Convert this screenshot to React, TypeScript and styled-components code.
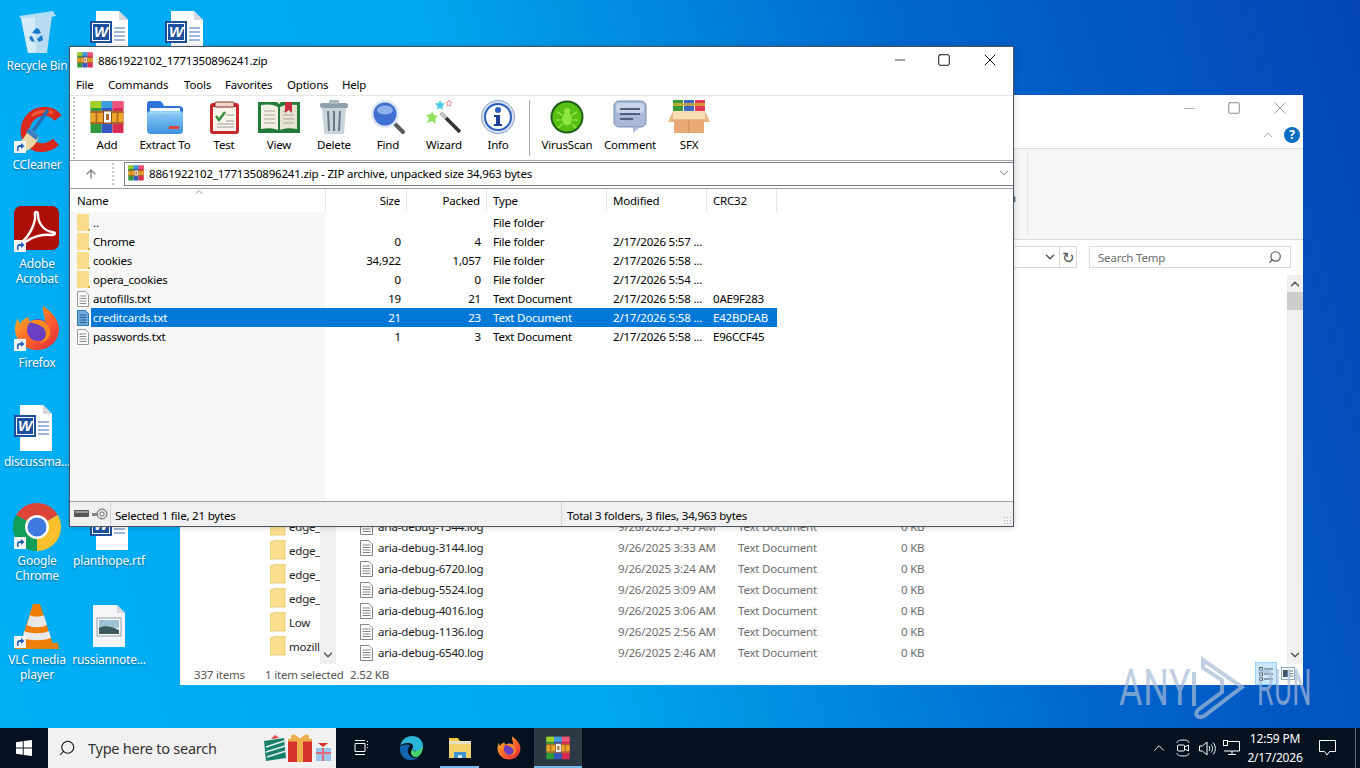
import { ReactNode } from 'react'
import styled, { createGlobalStyle } from 'styled-components'
import { ArrowUp, ChevronDown, ChevronUp, Minus, Search, Square, X } from 'lucide-react'

const GlobalStyle = createGlobalStyle`
  html, body {
    margin: 0;
    padding: 0;
    background: #0078d7;
  }
  * {
    box-sizing: border-box;
  }
`

const uiFont = `"Noto Sans", "Open Sans", "Liberation Sans", sans-serif`

/* ---------- drawings ---------- */

function Shortcut() {
  return (
    <ShortcutBadge viewBox="0 0 12 12">
      <rect width="12" height="12" fill="#f4f4f4" />
      <path d="M3 10V7c0-2 1-3 3-3h1V2l3.5 3L7 8V6H6C5 6 4.5 6.5 4.5 7.500V10z" fill="#1c5fb8" />
    </ShortcutBadge>
  )
}

function WordDoc({ size = 48 }: { size?: number }) {
  return (
    <svg width={size} height={size} viewBox="0 0 48 48">
      <path d="M11 1h23l9 9v37H11z" fill="#fff" />
      <path d="M34 1l9 9h-9z" fill="#d5d9de" />
      <path d="M29 18h11M29 22h11M29 26h11M29 30h11" stroke="#3f6fb5" strokeWidth="1.200" />
      <rect x="6" y="12" width="20" height="20" fill="#fff" stroke="#1d4f9f" strokeWidth="2" />
      <rect x="8" y="14" width="16" height="16" fill="#1d4f9f" />
      <text x="16" y="27" fontSize="15" fontWeight="700" fontStyle="italic" fill="#fff" textAnchor="middle" fontFamily="Liberation Sans">W</text>
    </svg>
  )
}

function RecycleBin() {
  return (
    <svg width="44" height="44" viewBox="0 0 44 44">
      <path d="M4 6l34-5 3 5-32 6z" fill="#dceef8" opacity=".8" />
      <path d="M6 8l31-3-5 38H13z" fill="#b9dcf0" />
      <path d="M6 8l14-1 1 36h-8z" fill="#d4ecf8" />
      <path d="M17 23l4-5 3 1 2 4-3 1zM27 25l1 5-4 2-2-3zM14 27l3-1 3 6-4-1z" fill="#1979c9" />
    </svg>
  )
}

function CCleaner() {
  return (
    <svg width="50" height="50" viewBox="0 0 50 50">
      <path d="M46 11C40 3 28 2 20 9 12 16 11 28 17 35c6 7 18 8 27 0" fill="none" stroke="#d9281e" strokeWidth="9" />
      <path d="M20 9c5-5 14-6 21-3" fill="none" stroke="#f0583a" strokeWidth="3" />
      <path d="M36 3L21 24" stroke="#2a6fb4" strokeWidth="3.500" />
      <path d="M17 21l10 8c-2 8-9 15-17 16-3-1-7-4-8-7 7-2 12-9 15-17z" fill="#ead6a6" />
      <path d="M17 21l10 8-3 4-10-8z" fill="#3a7fc0" />
    </svg>
  )
}

function Acrobat() {
  return (
    <svg width="46" height="46" viewBox="0 0 46 46">
      <rect width="45" height="44" rx="7" fill="#ab0f07" />
      <path d="M9 35C16 29 22 16 21 9c-1-4 3-4 3 0 0 8 6 16 14 17 4 0 4 3-1 3-9-1-19 2-24 6-4 3-6 2-4 0z" fill="none" stroke="#fff" strokeWidth="2.400" />
    </svg>
  )
}

function FirefoxLogo({ size = 46 }: { size?: number }) {
  return (
    <svg width={size} height={size} viewBox="0 0 46 46">
      <defs>
        <linearGradient id="ffBody" x1="0" y1="0" x2="1" y2="1">
          <stop offset="0" stopColor="#ffc21f" />
          <stop offset=".5" stopColor="#ff6a2b" />
          <stop offset="1" stopColor="#e0203f" />
        </linearGradient>
      </defs>
      <path d="M29 1c9 6 16 14 16 23 0 12-10 21-22 21S1 36 1 24c0-4 1-8 3-11 0 3 1 5 2 6 2-4 5-6 9-7-1 3 0 4 2 5 5-1 10 0 14-1 0-5-3-10-2-15z" fill="url(#ffBody)" />
      <circle cx="24" cy="25" r="11" fill="#6b3fc4" />
      <path d="M15 17c8-5 20-2 21 9 1 7-5 12-11 12 6-3 8-8 6-13-2-4-8-6-16-8z" fill="#ff8a1e" />
    </svg>
  )
}

function ChromeLogo() {
  return (
    <svg width="48" height="48" viewBox="0 0 48 48">
      <path d="M24 24L3.220 12A24 24 0 0 1 44.780 12z" fill="#db4437" />
      <path d="M24 24L44.780 12A24 24 0 0 1 24 48z" fill="#fbc02d" />
      <path d="M24 24V48A24 24 0 0 1 3.220 12z" fill="#0f9d58" />
      <circle cx="24" cy="24" r="12" fill="#fff" />
      <circle cx="24" cy="24" r="9.500" fill="#3f78e0" />
    </svg>
  )
}

function VlcCone() {
  return (
    <svg width="48" height="48" viewBox="0 0 48 48">
      <path d="M3 41h42l1 6H2z" fill="#e8820c" />
      <path d="M20 2h7l13 41H7z" fill="#f07d05" />
      <path d="M17 13c3 2 10 2 14 0l3 10c-5 3-15 3-20 0zM11 29c6 3 19 3 25 0l2 7c-7 3-21 3-28 0z" fill="#e8e8e8" />
    </svg>
  )
}

function ImageDoc() {
  return (
    <svg width="34" height="44" viewBox="0 0 34 44">
      <path d="M1 1h24l8 8v34H1z" fill="#f5f6f7" />
      <path d="M25 1l8 8h-8z" fill="#d5d9de" />
      <rect x="5" y="14" width="24" height="18" fill="#fff" stroke="#8f9ba6" />
      <rect x="7" y="16" width="20" height="8" fill="#9fc3d6" />
      <path d="M7 24c5-3 12-2 20 2v4H7z" fill="#3e5a5f" />
    </svg>
  )
}

function FolderGlyph() {
  return (
    <svg width="13" height="17" viewBox="0 0 13 17">
      <path d="M0 0h12v15l1 2H0z" fill="#fbdc8a" />
      <path d="M11 15h2v2h-2z" fill="#d8ae45" />
    </svg>
  )
}

function NavFolder() {
  return (
    <svg width="16" height="20" viewBox="0 0 16 20">
      <path d="M0 2h3l1-2h11v19H0z" fill="#fcdf8c" stroke="#e3c36a" strokeWidth=".8" />
    </svg>
  )
}

function TextGlyph({ selected = false }: { selected?: boolean }) {
  const line = selected ? '#1b5f9e' : '#8a8a8a'
  return (
    <svg width="12" height="16" viewBox="0 0 12 16">
      <path d="M.5.5h8l3 3v12H.5z" fill={selected ? '#74a9d8' : '#fff'} stroke={selected ? '#2d7ab8' : '#9a9a9a'} />
      <path d="M2.500 5h7M2.500 7.500h7M2.500 10h7M2.500 12.500h7" stroke={line} />
    </svg>
  )
}

function LogGlyph() {
  return (
    <svg width="13" height="16" viewBox="0 0 13 16">
      <path d="M.5.500h8.500l3.500 3.500v11.500H.5z" fill="#fff" stroke="#858585" />
      <path d="M2.500 5h8M2.500 7.500h8M2.500 10h8M2.500 12.500h8" stroke="#858585" />
    </svg>
  )
}

function RarBooks({ size = 32 }: { size?: number }) {
  return (
    <svg width={size} height={size} viewBox="0 0 33 34">
      <rect x="0" y="1" width="11" height="32" rx="1" fill="#2f9a3c" />
      <rect x="11" y="1" width="11" height="32" rx="1" fill="#3557c0" />
      <rect x="22" y="1" width="11" height="32" rx="1" fill="#d92c50" />
      <rect x="0" y="1" width="11" height="7" fill="#a4d02c" />
      <rect x="11" y="1" width="11" height="7" fill="#3f9ede" />
      <rect x="22" y="1" width="11" height="7" fill="#f0547a" />
      <rect x="0" y="11" width="33" height="2" fill="#a8682c" />
      <rect x="0" y="13" width="33" height="9" fill="#eda52a" />
      <rect x="0" y="22" width="33" height="2" fill="#a8682c" />
      <path d="M6 13v9M27 13v9" stroke="#b96f20" strokeWidth="2" />
      <rect x="13" y="11" width="8" height="12" fill="#fff" stroke="#8a5020" />
      <rect x="15.500" y="14" width="3" height="6" fill="#a8682c" />
    </svg>
  )
}

function ExtractIcon() {
  return (
    <svg width="36" height="34" viewBox="0 0 36 34">
      <defs>
        <linearGradient id="extractBlue" x1="0" y1="0" x2="0" y2="1">
          <stop offset="0" stopColor="#8fd0f7" />
          <stop offset="1" stopColor="#3d8fe0" />
        </linearGradient>
      </defs>
      <path d="M0 4c0-2 1-3 3-3h9c2 0 3 1 4 3l1 2h15c2 0 4 1 4 3v4H0z" fill="#2f73d8" />
      <rect x="3" y="8" width="30" height="6" fill="#f3f8fb" />
      <rect x="0" y="11" width="36" height="23" rx="4" fill="url(#extractBlue)" />
      <path d="M4 13h28" stroke="#d8effc" strokeDasharray="1.500 1.500" />
      <rect x="22" y="26" width="10" height="3" fill="#e0453a" />
    </svg>
  )
}

function TestIcon() {
  return (
    <svg width="29" height="33" viewBox="0 0 29 33">
      <rect x="0" y="2" width="29" height="31" rx="3" fill="#c9252c" />
      <rect x="3" y="6" width="23" height="24" fill="#f5f3ea" />
      <rect x="5" y="1" width="19" height="5" rx="1" fill="#f0d8c8" stroke="#8b2a2a" />
      <path d="M6 15l3 4 6-8" fill="none" stroke="#2f8f3a" strokeWidth="2.500" />
      <path d="M16 20h8M7 23h17M7 26h17" stroke="#9a9a9a" />
      <path d="M16 14h8" stroke="#9a9a9a" />
    </svg>
  )
}

function ViewIcon() {
  return (
    <svg width="42" height="31" viewBox="0 0 42 31">
      <path d="M0 0h19l2 2 2-2h19v31H0z" fill="#237b3a" />
      <path d="M3 3c6-1 12-1 17 2v23c-5-2-11-2-17-1z" fill="#f2f0e4" />
      <path d="M39 3c-6-1-12-1-17 2v23c5-2 11-2 17-1z" fill="#e8e4d3" />
      <path d="M6 9h11M6 13h11M6 17h11M6 21h11M25 9h5M25 13h11M25 17h11M25 21h11" stroke="#a8a79c" />
      <path d="M27 0h7v11l-3.500-3-3.500 3z" fill="#c92e3c" />
    </svg>
  )
}

function TrashIcon() {
  return (
    <svg width="30" height="34" viewBox="0 0 30 34">
      <rect x="1" y="3" width="28" height="5" rx="2" fill="#8da0ad" />
      <rect x="10" y="0" width="10" height="4" rx="1" fill="#aab8c2" />
      <path d="M3 8h24l-2 25c0 1-1 1-2 1H7c-1 0-2 0-2-1z" fill="#c9d3da" />
      <path d="M9 11l1 20M15 11v20M21 11l-1 20" stroke="#66788a" strokeWidth="2" />
    </svg>
  )
}

function FindIcon() {
  return (
    <svg width="36" height="36" viewBox="0 0 36 36">
      <path d="M23 23l10 10" stroke="#5b5b5b" strokeWidth="4" strokeLinecap="round" />
      <circle cx="15" cy="15" r="14" fill="#dfe7f4" />
      <circle cx="15" cy="15" r="11.500" fill="#3f6fd0" />
      <ellipse cx="15" cy="11" rx="8" ry="4.500" fill="#8fb0ea" />
    </svg>
  )
}

function WizardIcon() {
  return (
    <svg width="36" height="34" viewBox="0 0 36 34">
      <path d="M15 13l19 19" stroke="#333" strokeWidth="3.500" />
      <path d="M15 13l5 5" stroke="#c8c8c8" strokeWidth="3.500" />
      <path d="M6 11l2 4 4 1-3 3 1 5-4-3-5 2 2-5-3-3 5-1z" fill="#8fe05c" />
      <path d="M14 0l1.500 3 3.500.500-2.500 2.500.500 3.500-3-1.500-3 1.500.500-3.500L9 3.500l3.500-.5z" fill="#4ccbe8" />
      <path d="M23 0l1 2 2 .5-1.500 1.500.5 2-2-1-2 1 .5-2L20 2.500l2-.5z" fill="none" stroke="#ee8fa0" />
    </svg>
  )
}

function InfoIcon() {
  return (
    <svg width="34" height="34" viewBox="0 0 34 34">
      <circle cx="17" cy="17" r="16.500" fill="#d6dff0" stroke="#8fa3c8" />
      <circle cx="17" cy="17" r="13" fill="#fff" stroke="#2c5fc0" strokeWidth="2" />
      <circle cx="17" cy="10" r="3" fill="#2c5fc0" />
      <path d="M13 15h6v9h2v2h-8v-2h2v-7h-2z" fill="#1c3f9c" />
    </svg>
  )
}

function VirusIcon() {
  return (
    <svg width="34" height="34" viewBox="0 0 34 34">
      <circle cx="17" cy="17" r="16.500" fill="#1f5c17" />
      <circle cx="17" cy="17" r="14.500" fill="#58bf14" />
      <ellipse cx="17" cy="19" rx="5" ry="6.500" fill="#8fe63c" />
      <circle cx="17" cy="11" r="3" fill="#8fe63c" />
      <path d="M12 15l-5-3M22 15l5-3M11 20H6M23 20h5M12 24l-4 4M22 24l4 4" stroke="#8fe63c" strokeWidth="1.500" />
    </svg>
  )
}

function CommentIcon() {
  return (
    <svg width="34" height="34" viewBox="0 0 34 34">
      <rect x="1" y="1" width="32" height="26" rx="5" fill="#a9b9d6" stroke="#7d8fb0" />
      <rect x="3" y="3" width="28" height="10" rx="4" fill="#c8d4e8" />
      <path d="M7 9h20M7 14h20M7 19h13" stroke="#4f5f7c" strokeWidth="2" />
      <path d="M20 27h7l-7 6z" fill="#a9b9d6" />
    </svg>
  )
}

function SfxIcon() {
  return (
    <svg width="42" height="34" viewBox="0 0 42 34">
      <rect x="5" y="0" width="10" height="14" fill="#3d9a3a" />
      <rect x="16" y="0" width="10" height="14" fill="#3f67c0" />
      <rect x="27" y="0" width="10" height="14" fill="#e03a58" />
      <rect x="5" y="3" width="32" height="3" fill="#d8b030" opacity=".8" />
      <path d="M5 11h32v8H5z" fill="#f6dfb4" />
      <path d="M5 11L0 22h6V32h30V22h6l-5-11v8H5z" fill="#eab583" />
      <path d="M6 20h30v13H6z" fill="#e8ab78" />
      <path d="M21 20v13" stroke="#c98a58" />
    </svg>
  )
}

function DriveGlyphs() {
  return (
    <svg width="34" height="12" viewBox="0 0 34 12">
      <rect x="0" y="2" width="15" height="7" rx="1" fill="#555" />
      <rect x="1" y="3" width="13" height="2" fill="#999" />
      <circle cx="28" cy="6" r="5" fill="#ddd" stroke="#666" />
      <circle cx="28" cy="6" r="2" fill="#fff" stroke="#777" />
      <path d="M18 5h6v3h-6z" fill="#888" />
    </svg>
  )
}

function WindowsLogo() {
  return (
    <svg width="16" height="16" viewBox="0 0 16 16">
      <path d="M0 2.200l6.800-1v6.300H0zM7.700 1.100L16 0v7.500H7.700zM0 8.400h6.800v6.400L0 13.800zM7.700 8.400H16V16l-8.300-1.100z" fill="#fff" />
    </svg>
  )
}

function GiftBoxes() {
  return (
    <svg width="68" height="28" viewBox="0 0 68 28">
      <path d="M0 7l20-3 2 20-20 3z" fill="#17806a" />
      <path d="M2 13l18-6M2 18l19-6M3 23l19-6" stroke="#e6eef0" strokeWidth="1.500" />
      <path d="M7 5l4-4 4 3z" fill="#d64a3c" />
      <rect x="24" y="6" width="24" height="22" fill="#d6322b" />
      <rect x="33" y="6" width="6" height="22" fill="#eeb04c" />
      <path d="M24 6h24" stroke="#eeb04c" strokeWidth="3" />
      <path d="M36 5c-4-5-9-6-9-2s5 3 9 2c4-5 9-6 9-2s-5 3-9 2z" fill="#eeb04c" />
      <rect x="52" y="14" width="15" height="13" fill="#9cc6ea" />
      <path d="M59 14v13M52 19h15" stroke="#e36a7a" strokeWidth="2" />
      <path d="M59 13l-5-4h10z" fill="#d6322b" />
    </svg>
  )
}

function TaskViewIcon() {
  return (
    <svg width="17" height="16" viewBox="0 0 17 16" fill="none" stroke="#fff">
      <path d="M3 3.500h10v8H3zM3 .5h10M3 14.500h10M15.500 1v1M15.500 4v1M15.500 7v1" />
    </svg>
  )
}

function EdgeLogo() {
  return (
    <svg width="24" height="24" viewBox="0 0 24 24">
      <path d="M1 11C2 4 7 0 13 0c6 0 11 4 11 10 0 3-3 5-6 5-3 0-5-1-5-2 2-2 1-6-3-6C5 7 1 8 1 11z" fill="#2bb5d8" />
      <path d="M1 11c3-3 8-3 10-1-3 2-3 7 0 10 2 2 6 3 9 1-3 3-7 3-10 3-6-1-10-7-9-13z" fill="#1266b0" />
      <path d="M13 13c1 3 6 4 11-3 0 6-3 10-6 11-4 1-8-3-5-8z" fill="#47d16a" />
    </svg>
  )
}

function ExplorerLogo() {
  return (
    <svg width="24" height="22" viewBox="0 0 24 22">
      <path d="M1 1h9l2 3h11v17H1z" fill="#f7c948" />
      <path d="M1 4h22v3H1z" fill="#e6e2c8" />
      <path d="M1 7h22v14H1z" fill="#f5d36a" />
      <path d="M6 15h12v6H6z" fill="#3f93d0" />
      <path d="M10 18h4v3h-4z" fill="#d6e8f5" />
    </svg>
  )
}

function MeetIcon() {
  return (
    <svg width="14" height="18" viewBox="0 0 14 18" fill="none" stroke="#fff">
      <path d="M1 4c0-2 2-3 6-3s6 1 6 3M1 14c0 2 2 3 6 3s6-1 6-3" />
      <rect x="1.500" y="6" width="7" height="6" rx="1" />
      <path d="M8.500 8l4-2v6l-4-2" />
    </svg>
  )
}

function SpeakerIcon() {
  return (
    <svg width="17" height="15" viewBox="0 0 17 15" fill="none" stroke="#fff">
      <path d="M.5 5h3L8 1v13L3.500 10h-3z" />
      <path d="M10 5c1 1 1 4 0 5M12 3.500c2 2 2 6 0 8M14 1.500c3 3 3 9 0 12" />
    </svg>
  )
}

function NetworkIcon() {
  return (
    <svg width="17" height="16" viewBox="0 0 17 16" fill="none" stroke="#fff">
      <path d="M4 1.500h12.500V11H1" />
      <rect x=".5" y=".5" width="4" height="5" />
      <path d="M9 11v3M5 14.500h8" />
    </svg>
  )
}

function NotificationIcon() {
  return (
    <svg width="17" height="16" viewBox="0 0 17 16" fill="none" stroke="#fff">
      <path d="M.5.500h16v11h-6L8 15l-2.500-3.500h-5z" />
    </svg>
  )
}

/* ---------- data ---------- */

const toolbarButtons: { label: string; width: number; icon: ReactNode }[] = [
  { label: 'Add', width: 58, icon: <RarBooks size={34} /> },
  { label: 'Extract To', width: 58, icon: <ExtractIcon /> },
  { label: 'Test', width: 60, icon: <TestIcon /> },
  { label: 'View', width: 50, icon: <ViewIcon /> },
  { label: 'Delete', width: 60, icon: <TrashIcon /> },
  { label: 'Find', width: 48, icon: <FindIcon /> },
  { label: 'Wizard', width: 64, icon: <WizardIcon /> },
  { label: 'Info', width: 44, icon: <InfoIcon /> },
]

const toolbarButtonsRight: { label: string; width: number; icon: ReactNode }[] = [
  { label: 'VirusScan', width: 56, icon: <VirusIcon /> },
  { label: 'Comment', width: 70, icon: <CommentIcon /> },
  { label: 'SFX', width: 48, icon: <SfxIcon /> },
]

const menuItems = [
  { label: 'File', width: 32 },
  { label: 'Commands', width: 76 },
  { label: 'Tools', width: 41 },
  { label: 'Favorites', width: 62 },
  { label: 'Options', width: 55 },
  { label: 'Help', width: 40 },
]

const archiveRows = [
  { name: '..', size: '', packed: '', type: 'File folder', modified: '', crc: '', folder: true },
  { name: 'Chrome', size: '0', packed: '4', type: 'File folder', modified: '2/17/2026 5:57 ...', crc: '', folder: true },
  { name: 'cookies', size: '34,922', packed: '1,057', type: 'File folder', modified: '2/17/2026 5:58 ...', crc: '', folder: true },
  { name: 'opera_cookies', size: '0', packed: '0', type: 'File folder', modified: '2/17/2026 5:54 ...', crc: '', folder: true },
  { name: 'autofills.txt', size: '19', packed: '21', type: 'Text Document', modified: '2/17/2026 5:58 ...', crc: '0AE9F283', folder: false },
  { name: 'creditcards.txt', size: '21', packed: '23', type: 'Text Document', modified: '2/17/2026 5:58 ...', crc: 'E42BDEAB', folder: false, selected: true },
  { name: 'passwords.txt', size: '1', packed: '3', type: 'Text Document', modified: '2/17/2026 5:58 ...', crc: 'E96CCF45', folder: false },
]

const navFolders = ['edge_BITS_4576_2060128', 'edge_BITS_5124_1481553', 'edge_BITS_6100_2105712', 'edge_BITS_6388_1953421', 'Low', 'mozilla-temp-files']

const logRows = [
  ['aria-debug-1344.log', '9/26/2025 3:43 AM'],
  ['aria-debug-3144.log', '9/26/2025 3:33 AM'],
  ['aria-debug-6720.log', '9/26/2025 3:24 AM'],
  ['aria-debug-5524.log', '9/26/2025 3:09 AM'],
  ['aria-debug-4016.log', '9/26/2025 3:06 AM'],
  ['aria-debug-1136.log', '9/26/2025 2:56 AM'],
  ['aria-debug-6540.log', '9/26/2025 2:46 AM'],
]

export default function App() {
  return (
    <>
      <GlobalStyle />
      <Screen>
        <Desktop>
          <DesktopIcon $left={0} $top={8}>
            <IconSlot $pad={2}><RecycleBin /></IconSlot>
            <IconLabel>Recycle Bin</IconLabel>
          </DesktopIcon>
          <DesktopIcon $left={72} $top={8}>
            <IconSlot $pad={2}><WordDoc /></IconSlot>
          </DesktopIcon>
          <DesktopIcon $left={147} $top={8}>
            <IconSlot $pad={2}><WordDoc /></IconSlot>
          </DesktopIcon>
          <DesktopIcon $left={0} $top={107}>
            <IconSlot><CCleaner /><Shortcut /></IconSlot>
            <IconLabel>CCleaner</IconLabel>
          </DesktopIcon>
          <DesktopIcon $left={0} $top={206}>
            <IconSlot><Acrobat /><Shortcut /></IconSlot>
            <IconLabel>Adobe Acrobat</IconLabel>
          </DesktopIcon>
          <DesktopIcon $left={0} $top={305}>
            <IconSlot><FirefoxLogo /><Shortcut /></IconSlot>
            <IconLabel>Firefox</IconLabel>
          </DesktopIcon>
          <DesktopIcon $left={0} $top={404}>
            <IconSlot $shift={8}><WordDoc /></IconSlot>
            <IconLabel>discussma...</IconLabel>
          </DesktopIcon>
          <DesktopIcon $left={0} $top={503}>
            <IconSlot><ChromeLogo /><Shortcut /></IconSlot>
            <IconLabel>Google Chrome</IconLabel>
          </DesktopIcon>
          <DesktopIcon $left={72} $top={503}>
            <IconSlot><WordDoc /></IconSlot>
            <IconLabel>planthope.rtf</IconLabel>
          </DesktopIcon>
          <DesktopIcon $left={0} $top={602}>
            <IconSlot><VlcCone /><Shortcut /></IconSlot>
            <IconLabel>VLC media player</IconLabel>
          </DesktopIcon>
          <DesktopIcon $left={72} $top={602}>
            <IconSlot $pad={2}><ImageDoc /></IconSlot>
            <IconLabel>russiannote...</IconLabel>
          </DesktopIcon>

          <ExplorerWindow>
            <ExplorerTitle>
              <Minus size={17} strokeWidth={1} color="#888" />
              <Square size={14} strokeWidth={1.7} color="#888" />
              <X size={20} strokeWidth={1} color="#888" />
            </ExplorerTitle>
            <ExplorerTabs>
              <ChevronUp size={16} strokeWidth={1.5} color="#aaa" />
              <HelpBadge>?</HelpBadge>
            </ExplorerTabs>
            <Ribbon>
              <RibbonCut>Invert selection</RibbonCut>
              <RibbonRest />
            </Ribbon>
            <ExplorerAddress>
              <AddressBox>
                <ChevronDown size={14} strokeWidth={2.5} color="#555" />
                <AddressRefresh>&#8635;</AddressRefresh>
              </AddressBox>
              <SearchBox>
                <span>Search Temp</span>
                <Search size={14} color="#555" style={{ transform: 'scaleX(-1)' }} />
              </SearchBox>
            </ExplorerAddress>
            <ExplorerBody>
              <NavPane>
                <NavRows>
                  {navFolders.map((folder) => (
                    <NavRow key={folder}>
                      <NavFolder />
                      <span>{folder}</span>
                    </NavRow>
                  ))}
                </NavRows>
                <ScrollBar>
                  <ChevronUp size={14} strokeWidth={2.5} color="#555" />
                  <ChevronDown size={14} strokeWidth={2.5} color="#555" />
                </ScrollBar>
              </NavPane>
              <LogList>
                {logRows.map(([name, date]) => (
                  <LogRow key={name}>
                    <LogGlyph />
                    <LogName>{name}</LogName>
                    <LogMeta>{date}</LogMeta>
                    <LogMeta>Text Document</LogMeta>
                    <LogMeta>0 KB</LogMeta>
                  </LogRow>
                ))}
              </LogList>
              <ScrollBar>
                <ChevronUp size={14} strokeWidth={2.5} color="#555" />
                <ScrollThumb />
                <ChevronDown size={14} strokeWidth={2.5} color="#555" />
              </ScrollBar>
            </ExplorerBody>
            <ExplorerStatus>
              <StatusCell $width={71}>337 items</StatusCell>
              <StatusCell $width={85}>1 item selected</StatusCell>
              <StatusCell $width={60}>2.52 KB</StatusCell>
              <ViewButtons>
                <ViewDetails>
                  <svg width="18" height="18" viewBox="0 0 18 18" fill="none" stroke="#555">
                    <path d="M2.500 2.500h3v3h-3zM2.500 7.500h3v3h-3zM2.500 12.500h3v3h-3zM7 4h9M7 9h9M7 14h9" />
                  </svg>
                </ViewDetails>
                <ViewThumbs>
                  <svg width="14" height="13" viewBox="0 0 14 13">
                    <rect x=".5" y=".5" width="13" height="12" fill="#fff" stroke="#8ab" />
                    <rect x="2" y="3" width="5" height="7" fill="#456" />
                    <path d="M8 4h4M8 6.500h4M8 9h4" stroke="#678" />
                  </svg>
                </ViewThumbs>
              </ViewButtons>
            </ExplorerStatus>
          </ExplorerWindow>

          <RarWindow>
            <RarTitle>
              <RarBooks size={16} />
              <RarTitleText>8861922102_1771350896241.zip</RarTitleText>
              <RarControls>
                <Minus size={16} strokeWidth={1.2} color="#111" />
                <Square size={14} strokeWidth={1.7} color="#111" />
                <X size={20} strokeWidth={1.2} color="#111" />
              </RarControls>
            </RarTitle>
            <MenuBar>
              {menuItems.map((item) => (
                <MenuItem key={item.label} $width={item.width}>{item.label}</MenuItem>
              ))}
            </MenuBar>
            <Toolbar>
              <ToolbarGrip />
              {toolbarButtons.map((button) => (
                <ToolButton key={button.label} $width={button.width}>
                  <ToolIcon>{button.icon}</ToolIcon>
                  <ToolLabel>{button.label}</ToolLabel>
                </ToolButton>
              ))}
              <ToolbarSeparator />
              {toolbarButtonsRight.map((button) => (
                <ToolButton key={button.label} $width={button.width}>
                  <ToolIcon>{button.icon}</ToolIcon>
                  <ToolLabel>{button.label}</ToolLabel>
                </ToolButton>
              ))}
            </Toolbar>
            <AddressRow>
              <UpButton><ArrowUp size={14} strokeWidth={2.5} color="#8c8c8c" /></UpButton>
              <AddressGrip />
              <AddressField>
                <RarBooks size={16} />
                <AddressText>8861922102_1771350896241.zip - ZIP archive, unpacked size 34,963 bytes</AddressText>
                <ChevronDown size={14} strokeWidth={1.2} color="#333" />
              </AddressField>
            </AddressRow>
            <ArchiveList>
              <ArchiveHeader>
                <HeaderName>
                  Name
                  <SortCaret><ChevronUp size={12} strokeWidth={1.2} color="#555" /></SortCaret>
                </HeaderName>
                <HeaderCell $align="right" $width={81}>Size</HeaderCell>
                <HeaderCell $align="right" $width={80}>Packed</HeaderCell>
                <HeaderCell $align="left" $width={120}>Type</HeaderCell>
                <HeaderCell $align="left" $width={100}>Modified</HeaderCell>
                <HeaderCell $align="left" $width={70}>CRC32</HeaderCell>
              </ArchiveHeader>
              <ArchiveBody>
                {archiveRows.map((row) => (
                  <ArchiveRow key={row.name}>
                    <RowIcon>{row.folder ? <FolderGlyph /> : <TextGlyph selected={row.selected} />}</RowIcon>
                    <RowBand $selected={!!row.selected}>
                      <RowName>{row.name}</RowName>
                      <RowNumber>{row.size}</RowNumber>
                      <RowNumber>{row.packed}</RowNumber>
                      <RowText>{row.type}</RowText>
                      <RowText>{row.modified}</RowText>
                      <RowText>{row.crc}</RowText>
                    </RowBand>
                  </ArchiveRow>
                ))}
              </ArchiveBody>
            </ArchiveList>
            <RarStatus>
              <StatusDrives><DriveGlyphs /></StatusDrives>
              <StatusLeft>Selected 1 file, 21 bytes</StatusLeft>
              <StatusRight>Total 3 folders, 3 files, 34,963 bytes</StatusRight>
              <StatusGrip />
            </RarStatus>
          </RarWindow>

          <Watermark>
            <WatermarkText $scale={0.72}>ANY</WatermarkText>
            <svg width="58" height="64" viewBox="0 0 58 64" fill="none" stroke="#a8bcd8" strokeWidth="4">
              <path d="M4 16V50M13 4L52 31 14 60C8 63 4 59 8 54L32 36V24L13 12z" />
            </svg>
            <WatermarkText $scale={0.54}>RUN</WatermarkText>
          </Watermark>
        </Desktop>

        <Taskbar>
          <StartButton><WindowsLogo /></StartButton>
          <SearchBar>
            <Search size={18} strokeWidth={1.4} color="#111" style={{ transform: 'scaleX(-1)' }} />
            <SearchPrompt>Type here to search</SearchPrompt>
            <GiftBoxes />
          </SearchBar>
          <TaskIcon $width={48}><TaskViewIcon /></TaskIcon>
          <TaskIcon $width={48} $gap={3}><EdgeLogo /></TaskIcon>
          <TaskIcon $width={39} $gap={5} $running><ExplorerLogo /></TaskIcon>
          <TaskIcon $width={48} $gap={6}><FirefoxLogo size={24} /></TaskIcon>
          <TaskIcon $width={48} $gap={1} $running $active><RarBooks size={24} /></TaskIcon>
          <Tray>
            <TrayIcon $width={24}><ChevronUp size={18} strokeWidth={1.2} color="#fff" /></TrayIcon>
            <TrayIcon $width={24}><MeetIcon /></TrayIcon>
            <TrayIcon $width={24}><SpeakerIcon /></TrayIcon>
            <TrayIcon $width={24}><NetworkIcon /></TrayIcon>
            <Clock>
              <span>12:59 PM</span>
              <span>2/17/2026</span>
            </Clock>
            <TrayIcon $width={40}><NotificationIcon /></TrayIcon>
            <ShowDesktop />
          </Tray>
        </Taskbar>
      </Screen>
    </>
  )
}

/* ---------- desktop ---------- */

const Screen = styled.div`
  display: flex;
  flex-direction: column;
  width: 1360px;
  height: 768px;
  overflow: hidden;
  font-family: ${uiFont};
  font-size: 11.5px;
  letter-spacing: -0.2px;
  background: linear-gradient(75deg, #00b0f6 0%, #00a6ee 40%, #0064cc 72%, #0646b6 100%);
`

const Desktop = styled.div`
  position: relative;
  flex: 1;
`

const DesktopIcon = styled.div<{ $left: number; $top: number }>`
  position: absolute;
  left: ${(p) => p.$left}px;
  top: ${(p) => p.$top}px;
  display: flex;
  flex-direction: column;
  align-items: center;
  width: 74px;
`

const IconSlot = styled.div<{ $pad?: number; $shift?: number }>`
  position: relative;
  display: flex;
  justify-content: center;
  align-items: flex-start;
  width: 100%;
  height: 50px;
  padding-top: ${(p) => p.$pad ?? 0}px;
  padding-right: ${(p) => p.$shift ?? 0}px;
`

const ShortcutBadge = styled.svg`
  position: absolute;
  left: 14px;
  top: 34px;
  width: 12px;
  height: 12px;
`

const IconLabel = styled.div`
  width: 74px;
  color: #fff;
  font-size: 12px;
  line-height: 15px;
  text-align: center;
  letter-spacing: -0.2px;
  text-shadow: 0 1px 2px rgba(0, 0, 0, 0.45);
`

/* ---------- explorer behind ---------- */

const ExplorerWindow = styled.div`
  position: absolute;
  left: 180px;
  top: 95px;
  display: flex;
  flex-direction: column;
  width: 1123px;
  height: 590px;
  background: #fff;
  color: #000;
`

const ExplorerTitle = styled.div`
  display: flex;
  justify-content: flex-end;
  align-items: center;
  gap: 29px;
  height: 26px;
  padding-right: 13px;
`

const ExplorerTabs = styled.div`
  display: flex;
  justify-content: flex-end;
  align-items: center;
  gap: 8px;
  height: 27px;
  padding-right: 3px;
`

const HelpBadge = styled.div`
  display: flex;
  justify-content: center;
  align-items: center;
  width: 16px;
  height: 16px;
  border-radius: 50%;
  background: #0a6cc2;
  color: #fff;
  font-size: 12px;
  font-weight: 700;
`

const Ribbon = styled.div`
  display: flex;
  justify-content: flex-end;
  align-items: center;
  height: 92px;
  background: #f5f6f7;
  border-top: 1px solid #dadbdc;
  border-bottom: 1px solid #dadbdc;
`

const RibbonCut = styled.div`
  margin-right: 11px;
  padding-top: 7px;
  color: #333;
`

const RibbonRest = styled.div`
  width: 276px;
  height: 82px;
  border-left: 1px solid #e2e3e4;
`

const ExplorerAddress = styled.div`
  display: flex;
  justify-content: flex-end;
  align-items: center;
  height: 35px;
  padding-right: 12px;
  padding-bottom: 1px;
`

const AddressBox = styled.div`
  display: flex;
  justify-content: flex-end;
  align-items: center;
  width: 300px;
  height: 22px;
  margin-right: 12px;
  border: 1px solid #d9d9d9;
`

const AddressRefresh = styled.div`
  width: 17px;
  margin-left: 2px;
  border-left: 1px solid #d9d9d9;
  color: #555;
  font-size: 15px;
  line-height: 20px;
  text-align: center;
`

const SearchBox = styled.div`
  display: flex;
  justify-content: space-between;
  align-items: center;
  width: 202px;
  height: 22px;
  padding: 0 8px;
  border: 1px solid #d9d9d9;
  color: #6d6d6d;
`

const ExplorerBody = styled.div`
  display: flex;
  flex: 1;
  min-height: 0;
`

const NavPane = styled.div`
  display: flex;
  width: 156px;
`

const NavRows = styled.div`
  display: flex;
  flex: 1;
  flex-direction: column;
  justify-content: flex-end;
  min-width: 0;
  padding: 0 0 6px 90px;
  overflow: hidden;
`

const NavRow = styled.div`
  display: flex;
  align-items: center;
  gap: 3px;
  height: 24px;
  white-space: nowrap;
  color: #222;

  svg {
    flex: none;
  }
`

const ScrollBar = styled.div`
  display: flex;
  flex: none;
  flex-direction: column;
  justify-content: space-between;
  align-items: center;
  width: 16px;
  padding: 2px 0;
  background: #f0f0f0;
`

const ScrollThumb = styled.div`
  width: 16px;
  height: 18px;
  margin-top: 1px;
  margin-bottom: auto;
  background: #cdcdcd;
`

const LogList = styled.div`
  display: flex;
  flex: 1;
  flex-direction: column;
  justify-content: flex-end;
  padding: 0 0 1px 24px;
`

const LogRow = styled.div`
  display: grid;
  grid-template-columns: 18px 240px 120px 163px 40px;
  align-items: center;
  height: 21px;
  white-space: nowrap;
`

const LogName = styled.span`
  color: #1a1a1a;
`

const LogMeta = styled.span`
  color: #6d6d6d;
`

const ExplorerStatus = styled.div`
  display: flex;
  align-items: center;
  height: 21px;
  padding: 0 8px 0 14px;
  color: #555;
`

const StatusCell = styled.div<{ $width: number }>`
  width: ${(p) => p.$width}px;
  white-space: nowrap;
`

const ViewButtons = styled.div`
  display: flex;
  align-self: flex-end;
  align-items: center;
  gap: 4px;
  margin-left: auto;
`

const ViewDetails = styled.div`
  display: flex;
  justify-content: center;
  align-items: center;
  width: 22px;
  height: 23px;
  background: #cce8ff;
  border: 1px solid #99d1ff;
`

const ViewThumbs = styled.div`
  display: flex;
  align-items: center;
  width: 14px;
  height: 23px;
`

/* ---------- winrar window ---------- */

const RarWindow = styled.div`
  position: absolute;
  left: 69px;
  top: 46px;
  display: flex;
  flex-direction: column;
  width: 945px;
  height: 481px;
  background: #fff;
  border: 1px solid #4a5560;
  color: #000;
  box-shadow: 0 0 6px rgba(0, 0, 0, 0.2);
`

const RarTitle = styled.div`
  display: flex;
  align-items: center;
  flex: none;
  height: 26px;
  padding-left: 7px;
`

const RarTitleText = styled.div`
  margin-left: 5px;
`

const RarControls = styled.div`
  display: flex;
  align-items: center;
  gap: 29px;
  margin-left: auto;
  padding-right: 13px;
`

const MenuBar = styled.div`
  display: flex;
  align-items: center;
  flex: none;
  height: 23px;
  padding: 1px 0 0 6px;
  border-bottom: 1px solid #e6e6e6;
`

const MenuItem = styled.div<{ $width: number }>`
  width: ${(p) => p.$width}px;
`

const Toolbar = styled.div`
  display: flex;
  align-items: stretch;
  flex: none;
  height: 65px;
  padding-left: 3px;
  border-bottom: 1px solid #a6a6a6;
`

const ToolbarGrip = styled.div`
  width: 2px;
  margin: 1px 3px 1px 0;
  border-left: 2px dotted #c4c4c4;
`

const ToolButton = styled.div<{ $width: number }>`
  display: flex;
  flex-direction: column;
  align-items: center;
  flex: none;
  width: ${(p) => p.$width}px;
`

const ToolIcon = styled.div`
  display: flex;
  justify-content: center;
  align-items: center;
  height: 40px;
  padding-top: 2px;
`

const ToolLabel = styled.div`
  margin-top: 1px;
  white-space: nowrap;
  line-height: 16px;
`

const ToolbarSeparator = styled.div`
  width: 1px;
  margin: 4px 9px 4px 9px;
  background: #a8a8a8;
`

const AddressRow = styled.div`
  display: flex;
  align-items: center;
  flex: none;
  height: 25px;
`

const UpButton = styled.div`
  display: flex;
  justify-content: center;
  width: 42px;
`

const AddressGrip = styled.div`
  width: 2px;
  height: 22px;
  margin-right: 10px;
  border-left: 2px dotted #c4c4c4;
`

const AddressField = styled.div`
  display: flex;
  align-items: center;
  flex: 1;
  height: 24px;
  padding: 0 2px 1px 3px;
  border: 1px solid #7f7f7f;
  border-right: none;
`

const AddressText = styled.div`
  flex: 1;
  margin-left: 5px;
`

const ArchiveList = styled.div`
  display: flex;
  flex: 1;
  flex-direction: column;
  min-height: 0;
  margin-top: 2px;
  border-top: 1px solid #a0a0a0;
  border-bottom: 1px solid #a0a0a0;
`

const ArchiveHeader = styled.div`
  display: flex;
  flex: none;
  height: 23px;
`

const HeaderName = styled.div`
  position: relative;
  display: flex;
  align-items: center;
  width: 256px;
  padding-left: 7px;
  border-right: 1px solid #e5e5e5;
`

const SortCaret = styled.div`
  position: absolute;
  left: 123px;
  top: -3px;
`

const HeaderCell = styled.div<{ $width: number; $align: string }>`
  display: flex;
  align-items: center;
  justify-content: ${(p) => (p.$align === 'right' ? 'flex-end' : 'flex-start')};
  width: ${(p) => p.$width}px;
  padding: 0 6px;
  border-right: 1px solid #e5e5e5;
`

const ArchiveBody = styled.div`
  flex: 1;
  padding-top: 1px;
  background: linear-gradient(to right, #f7f7f7 256px, #fff 256px);
`

const ArchiveRow = styled.div`
  display: flex;
  height: 19px;
`

const RowIcon = styled.div`
  display: flex;
  align-items: center;
  width: 21px;
  padding-left: 7px;
`

const RowBand = styled.div<{ $selected: boolean }>`
  display: grid;
  grid-template-columns: 235px 81px 80px 120px 100px 70px;
  align-items: center;
  white-space: nowrap;
  background: ${(p) => (p.$selected ? '#0078d7' : 'transparent')};
  color: ${(p) => (p.$selected ? '#fff' : '#000')};
`

const RowName = styled.div`
  padding-left: 2px;
`

const RowNumber = styled.div`
  padding-right: 6px;
  text-align: right;
`

const RowText = styled.div`
  padding-left: 6px;
`

const RarStatus = styled.div`
  display: flex;
  align-items: center;
  flex: none;
  height: 24px;
  background: #f0f0f0;
`

const StatusDrives = styled.div`
  display: flex;
  align-items: center;
  width: 41px;
  height: 100%;
  padding-left: 4px;
  border-right: 1px solid #d4d4d4;
`

const StatusLeft = styled.div`
  width: 451px;
  height: 100%;
  padding-left: 4px;
  line-height: 28px;
  border-right: 1px solid #d4d4d4;
`

const StatusRight = styled.div`
  flex: 1;
  padding-left: 5px;
  line-height: 28px;
  height: 100%;
`

const StatusGrip = styled.div`
  align-self: flex-end;
  width: 9px;
  height: 9px;
  margin: 0 1px 1px 0;
  background: radial-gradient(circle, #a8a8a8 1px, transparent 1px) 0 0 / 3px 3px;
`

/* ---------- watermark ---------- */

const Watermark = styled.div`
  position: absolute;
  left: 1119px;
  top: 656px;
  display: flex;
  align-items: center;
  gap: 9px;
  opacity: 0.7;
  pointer-events: none;
`

const WatermarkText = styled.div<{ $scale: number }>`
  width: 62px;
  color: #a8bcd8;
  font-family: Roboto, "Liberation Sans", sans-serif;
  font-size: 50px;
  font-weight: 400;
  line-height: 64px;
  letter-spacing: 1px;
  transform: scaleX(${(p) => p.$scale});
  transform-origin: left center;
  white-space: nowrap;
`

/* ---------- taskbar ---------- */

const Taskbar = styled.div`
  display: flex;
  flex: none;
  height: 40px;
  background: #04121f;
`

const StartButton = styled.div`
  display: flex;
  justify-content: center;
  align-items: center;
  width: 48px;
`

const SearchBar = styled.div`
  display: flex;
  align-items: center;
  width: 288px;
  padding: 0 4px 0 10px;
  background: #f1f1f1;
`

const SearchPrompt = styled.div`
  flex: 1;
  margin-left: 12px;
  color: #333;
  font-size: 14.5px;
  letter-spacing: -0.25px;
`

const TaskIcon = styled.div<{ $width: number; $gap?: number; $running?: boolean; $active?: boolean }>`
  display: flex;
  justify-content: center;
  align-items: center;
  flex: none;
  width: ${(p) => p.$width}px;
  margin-left: ${(p) => p.$gap ?? 0}px;
  background: ${(p) => (p.$active ? '#2c3a46' : 'transparent')};
  border-bottom: 2px solid ${(p) => (p.$running ? '#76b9ed' : 'transparent')};
  border-top: 2px solid transparent;
`

const Tray = styled.div`
  display: flex;
  align-items: center;
  margin-left: auto;
  height: 100%;
`

const TrayIcon = styled.div<{ $width: number }>`
  display: flex;
  justify-content: center;
  align-items: center;
  width: ${(p) => p.$width}px;
`

const Clock = styled.div`
  display: flex;
  flex-direction: column;
  align-items: center;
  width: 64px;
  color: #fff;
  font-size: 12px;
  line-height: 19px;
`

const ShowDesktop = styled.div`
  width: 5px;
  height: 100%;
  margin-left: 8px;
  border-left: 1px solid #5c6770;
`
